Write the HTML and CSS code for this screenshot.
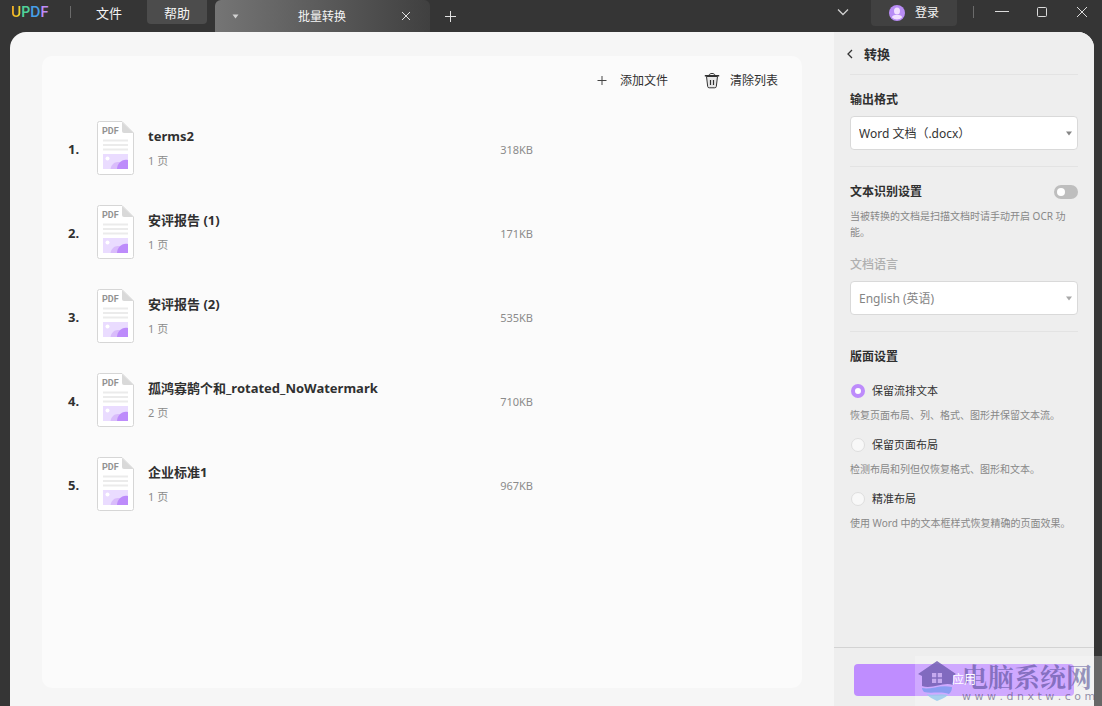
FILE: index.html
```html
<!DOCTYPE html>
<html lang="zh-CN">
<head>
<meta charset="utf-8">
<meta name="viewport" content="width=device-width, initial-scale=1">
<title>UPDF - 批量转换</title>
<link rel="stylesheet" href="styles.css">
</head>
<body>
<svg class="defs" width="0" height="0" aria-hidden="true">
  <symbol id="pdf-file" viewBox="0 0 37 54">
    <path d="M2.500.5H25L36.500 12V51.500a2 2 0 0 1-2 2h-32a2 2 0 0 1-2-2V2.500a2 2 0 0 1 2-2z" fill="#fff" stroke="#d6d6d6"/>
    <path d="M25 1v9a2 2 0 0 0 2 2h9.500z" fill="#d9d9d9"/>
    <path d="M6 19.500h25M6 24h25M6 28.500h25" stroke="#ebebeb" stroke-width="2"/>
    <path d="M6 33h25v15H6z" fill="#eadcff"/>
    <circle cx="10.500" cy="37.500" r="2" fill="#fff"/>
    <path d="M13.500 48c1-5 5-8 9.500-6.500V48z" fill="#d9bcfb"/>
    <path d="M20 48c0-5.500 5-10.500 11-9v9z" fill="#bd8bfb"/>
  </symbol>
</svg>
<header class="titlebar">
  <div class="logo"><span class="logo-u">U</span><span class="logo-p">P</span><span class="logo-d">D</span><span class="logo-f">F</span></div>
  <span class="divider"></span>
  <nav class="menu">
    <button class="menu-item">文件</button>
    <button class="menu-item menu-item-active">帮助</button>
  </nav>
  <div class="tab">
    <button class="tab-icon" aria-label="标签菜单"><svg width="7" height="5"><path d="M.5.5h6l-3 4z" fill="#d2d2d2"/></svg></button>
    <span class="tab-title">批量转换</span>
    <button class="tab-icon" aria-label="关闭标签"><svg width="10" height="10"><path d="M1 1l8 8M9 1L1 9" stroke="#e2e2e2"/></svg></button>
  </div>
  <button class="new-tab" aria-label="新建标签"><svg width="11" height="11"><path d="M0 5.500h11M5.500 0v11" stroke="#e2e2e2"/></svg></button>
  <div class="window-tools">
    <button class="window-button" aria-label="展开"><svg width="12" height="8"><path d="M1 1.500l5 5 5-5" fill="none" stroke="#d0d0d0" stroke-width="1.300"/></svg></button>
    <button class="login">
      <svg width="16" height="16"><circle cx="8" cy="8" r="8" fill="#b88cf5"/><ellipse cx="8" cy="6" rx="3" ry="3.500" fill="#f1dfff"/><path d="M3 12.500c0-2 2-2.500 5-2.500s5 .5 5 2.500c-2.500 2.500-7.500 2.500-10 0z" fill="#f1dfff"/></svg>
      登录
    </button>
    <span class="divider"></span>
    <button class="window-button" aria-label="最小化"><svg width="14" height="12"><path d="M0 5.500h14" stroke="#dcdcdc"/></svg></button>
    <button class="window-button" aria-label="最大化"><svg width="10" height="10"><rect x=".5" y=".5" width="9" height="9" rx="1" fill="none" stroke="#dcdcdc"/></svg></button>
    <button class="window-button" aria-label="关闭"><svg width="12" height="12"><path d="M1 1l10 10M11 1L1 11" stroke="#dcdcdc"/></svg></button>
  </div>
</header>
<main class="workspace">
  <section class="content">
    <div class="card">
      <div class="toolbar">
        <button class="tool"><svg width="16" height="16"><path d="M3.500 7.500h9M8 3v9" stroke="#444"/></svg>添加文件</button>
        <button class="tool"><svg width="16" height="18" fill="none" stroke="#333"><path d="M2.500 4.500l1.200 10a1.500 1.500 0 0 0 1.500 1.300h5.600a1.500 1.500 0 0 0 1.500-1.300l1.200-10z" fill="#e8e8e8"/><path d="M.8 3.700h14.400" stroke-width="1.600"/><path d="M5 3.500C5 .8 11 .8 11 3.500"/><path d="M6.500 8v5M9.500 8v5" stroke-width="1.200"/></svg>清除列表</button>
      </div>
      <ol class="files">
        <li class="file"><span class="number">1.</span><svg class="file-icon" width="37" height="54"><use href="#pdf-file"/><text x="5" y="13" class="file-type">PDF</text></svg><div class="info"><span class="name">terms2</span><span class="pages">1 页</span></div><span class="size">318KB</span></li>
        <li class="file"><span class="number">2.</span><svg class="file-icon" width="37" height="54"><use href="#pdf-file"/><text x="5" y="13" class="file-type">PDF</text></svg><div class="info"><span class="name">安评报告 (1)</span><span class="pages">1 页</span></div><span class="size">171KB</span></li>
        <li class="file"><span class="number">3.</span><svg class="file-icon" width="37" height="54"><use href="#pdf-file"/><text x="5" y="13" class="file-type">PDF</text></svg><div class="info"><span class="name">安评报告 (2)</span><span class="pages">1 页</span></div><span class="size">535KB</span></li>
        <li class="file"><span class="number">4.</span><svg class="file-icon" width="37" height="54"><use href="#pdf-file"/><text x="5" y="13" class="file-type">PDF</text></svg><div class="info"><span class="name">孤鸿寡鹄个和_rotated_NoWatermark</span><span class="pages">2 页</span></div><span class="size">710KB</span></li>
        <li class="file"><span class="number">5.</span><svg class="file-icon" width="37" height="54"><use href="#pdf-file"/><text x="5" y="13" class="file-type">PDF</text></svg><div class="info"><span class="name">企业标准1</span><span class="pages">1 页</span></div><span class="size">967KB</span></li>
      </ol>
    </div>
  </section>
  <aside class="panel">
    <div class="panel-body">
      <div class="panel-head">
        <button class="back" aria-label="返回"><svg width="6" height="10"><path d="M5 1L1 5l4 4" fill="none" stroke="#333" stroke-width="1.300"/></svg></button>
        <h1 class="panel-title">转换</h1>
      </div>
      <section class="group">
        <label class="heading" for="format">输出格式</label>
        <div class="select-box"><select id="format" class="select"><option>Word 文档（.docx）</option></select><svg class="caret" width="6" height="5"><path d="M0 .5h6L3 4.500z" fill="#858585"/></svg></div>
      </section>
      <section class="group">
        <div class="switch-row"><label class="heading" for="ocr">文本识别设置</label><input id="ocr" class="switch" type="checkbox" role="switch"></div>
        <p class="hint hint-ocr">当被转换的文档是扫描文档时请手动开启 OCR 功能。</p>
        <label class="heading heading-disabled" for="language">文档语言</label>
        <div class="select-box"><select id="language" class="select" disabled><option>English (英语)</option></select><svg class="caret" width="6" height="5"><path d="M0 .5h6L3 4.500z" fill="#a8a8a8"/></svg></div>
      </section>
      <section class="group">
        <h2 class="heading">版面设置</h2>
        <div class="options">
          <div class="option"><label class="option-label"><input class="radio" type="radio" name="layout" checked>保留流排文本</label><p class="hint">恢复页面布局、列、格式、图形并保留文本流。</p></div>
          <div class="option"><label class="option-label"><input class="radio" type="radio" name="layout">保留页面布局</label><p class="hint">检测布局和列但仅恢复格式、图形和文本。</p></div>
          <div class="option"><label class="option-label"><input class="radio" type="radio" name="layout">精准布局</label><p class="hint">使用 Word 中的文本框样式恢复精确的页面效果。</p></div>
        </div>
      </section>
    </div>
    <div class="panel-footer"><button class="apply"><span class="apply-label">应用</span></button></div>
  </aside>
</main>
<div class="watermark">
  <svg class="watermark-logo" width="38" height="42"><path d="M0 14L19 1l19 13-3 2v9c-9-4-21 5-31 1V16z" fill="#7460b4"/><path d="M14 13h10v10H14z" fill="#c4a9ed"/><path d="M19 13v10M14 18h10" stroke="#7460b4" stroke-width="1.500"/><path d="M4 28c9 2 18-4 30-1 0 3-1 5-3 7-9-3-18 0-25-2-1-1-2-3-2-4z" fill="#7e9af0"/><path d="M8 34c7 2 14-1 22 1-3 3-7 4-11 6-4-2-8-4-11-7z" fill="#9acbed"/></svg>
  <div class="watermark-text"><span class="watermark-name">电脑系统网</span><span class="watermark-url">w w w . d n x t w . c o m</span></div>
</div>
</body>
</html>
```
FILE: styles.css
```css
* { box-sizing: border-box; }

body {
  margin: 0;
  height: 100vh;
  display: flex;
  flex-direction: column;
  overflow: hidden;
  position: relative;
  background: #353535;
  color: #303030;
  font: 12px/16px "Noto Sans", "Noto Sans CJK SC", sans-serif;
}

.defs { position: absolute; }
svg { display: block; flex: none; }

button {
  margin: 0;
  padding: 0;
  border: 0;
  background: none;
  color: inherit;
  font: inherit;
}

h1, h2, p, ol { margin: 0; padding: 0; }

.titlebar {
  flex: none;
  height: 32px;
  display: flex;
  align-items: flex-start;
  color: #f5f5f5;
}

.logo {
  width: 59px;
  padding-left: 11px;
  font: 600 14px/24px Inter, sans-serif;
}
.logo-u {
  background: linear-gradient(90deg, #f5a623, #e8dc30);
  background-clip: text;
  color: transparent;
}
.logo-p { color: #4fd19a; }
.logo-d { color: #459fe8; }
.logo-f { color: #bd8cf6; }

.divider {
  width: 1px;
  height: 12px;
  margin: 6px 0 0 11px;
  background: #6b6b6b;
}

.menu { display: flex; gap: 8px; margin-left: 8px; }
.menu-item {
  width: 60px;
  height: 24px;
  padding-top: 1px;
  font-size: 13px;
  border-radius: 0 0 4px 4px;
}
.menu-item-active { background: #4c4c4c; }

.tab {
  width: 215px;
  height: 32px;
  margin-left: 8px;
  padding: 0 19px 0 17px;
  display: flex;
  align-items: center;
  justify-content: space-between;
  border-radius: 6px 6px 0 0;
  background: linear-gradient(90deg, #757575, #404040);
}
.tab-title { padding: 2px 0 0 4px; }
.new-tab { height: 32px; margin-left: 15px; }

.window-tools { display: flex; margin-left: auto; }
.window-button {
  width: 40px;
  height: 24px;
  display: flex;
  align-items: center;
  justify-content: center;
}
.login {
  width: 86px;
  height: 26px;
  margin-left: 8px;
  display: flex;
  align-items: center;
  justify-content: center;
  gap: 10px;
  border-radius: 0 0 4px 4px;
  background: #414141;
}
.window-tools .divider { margin: 6px 8px 0 16px; }

.workspace {
  flex: 1;
  min-height: 0;
  display: flex;
  margin: 0 8px 0 10px;
  overflow: hidden;
  border-radius: 16px 16px 0 0;
  background: #f6f6f6;
}
.content { flex: 1; min-width: 0; display: flex; padding: 24px 32px 18px; }
.card { flex: 1; min-width: 0; border-radius: 10px; background: #fbfbfb; }

.toolbar {
  height: 50px;
  padding: 0 24px 0 0;
  display: flex;
  justify-content: flex-end;
  align-items: center;
  gap: 36px;
}
.tool { display: flex; align-items: center; gap: 10px; }

.files { list-style: none; }
.file {
  height: 84px;
  padding-left: 26px;
  display: grid;
  grid-template-columns: 29px 51px 7fr 6fr;
  align-items: center;
}
.number, .name { font-weight: 700; font-size: 13px; }
.number { padding-top: 2px; }
.size { padding-top: 4px; }
.file-type { font: 700 9px Roboto, sans-serif; fill: #929292; }
.info { display: flex; flex-direction: column; gap: 9px; }
.pages, .size { color: #8b8b8b; font-size: 11px; }

.panel {
  width: 260px;
  flex: none;
  display: flex;
  flex-direction: column;
  background: #eee;
}
.panel-body { flex: 1; min-height: 0; padding: 0 16px; }
.panel-head {
  height: 43px;
  padding-top: 2px;
  display: flex;
  align-items: center;
  gap: 8px;
  border-bottom: 1px solid #e3e3e3;
}
.back { width: 6px; margin-left: -3px; padding-right: 3px; box-sizing: content-box; }
.panel-title { font-size: 13px; line-height: 16px; }

.group { padding: 17px 0 16px; }
.group + .group { border-top: 1px solid #e3e3e3; }
.heading { display: block; font-size: 12px; line-height: 16px; font-weight: 700; }
.heading-disabled { color: #b0b0b0; font-weight: 500; }

.select-box { position: relative; margin-top: 8px; }
.select {
  display: block;
  width: 100%;
  height: 34px;
  padding: 1px 20px 0 8px;
  appearance: none;
  border: 1px solid #d9d9d9;
  border-radius: 4px;
  background: #fff;
  color: #333;
  font: 12px/16px "Noto Sans", "Noto Sans CJK SC", sans-serif;
}
.select:disabled { color: #858585; opacity: 1; }
.caret { position: absolute; right: 6px; top: 15px; pointer-events: none; }

.switch-row { display: flex; align-items: center; justify-content: space-between; }
.switch {
  appearance: none;
  width: 24px;
  height: 14px;
  margin: 0;
  padding: 3px;
  border-radius: 7px;
  background: #bebebe;
}
.switch::before {
  content: "";
  display: block;
  width: 8px;
  height: 8px;
  border-radius: 50%;
  background: #fff;
}
.switch:checked { background: #bd8bfb; }
.switch:checked::before { margin-left: 10px; }

.hint { color: #888; font-size: 10px; line-height: 16px; }
.hint-ocr { margin: 8px 0 17px; }

.options { display: flex; flex-direction: column; gap: 14px; margin-top: 18px; }
.option { display: flex; flex-direction: column; gap: 8px; }
.option-label { display: flex; align-items: center; gap: 7px; padding-left: 1px; font-size: 11px; }
.radio {
  appearance: none;
  width: 14px;
  height: 14px;
  margin: 0;
  border: 1px solid #dedede;
  border-radius: 50%;
  background: #f8f8f8;
}
.radio:checked { border: 4px solid #bd8bfb; background: #fff; }

.panel-footer { padding: 16px 20px 10px; border-top: 1px solid #d3d3d3; }
.apply {
  display: block;
  width: 100%;
  height: 32px;
  border-radius: 4px;
  background: #bf8dff;
  color: #fff;
}
.apply-label { position: relative; z-index: 2; }

.watermark {
  position: absolute;
  z-index: 1;
  right: 0;
  bottom: 0;
  width: 187px;
  height: 50px;
  display: flex;
  gap: 6px;
  padding: 4px 0 0 3px;
  overflow: hidden;
  background: rgba(255, 255, 255, 0.25);
  pointer-events: none;
}
.watermark-logo { opacity: 0.85; }
.watermark-text { display: flex; flex-direction: column; white-space: nowrap; }
.watermark-name {
  color: rgba(70, 62, 140, 0.55);
  font: 700 26px/31px "Noto Serif CJK SC", "Noto Sans CJK SC", serif;
}
.watermark-url {
  color: rgba(80, 75, 115, 0.6);
  font: 11px/12px "DejaVu Sans", sans-serif;
}
```
